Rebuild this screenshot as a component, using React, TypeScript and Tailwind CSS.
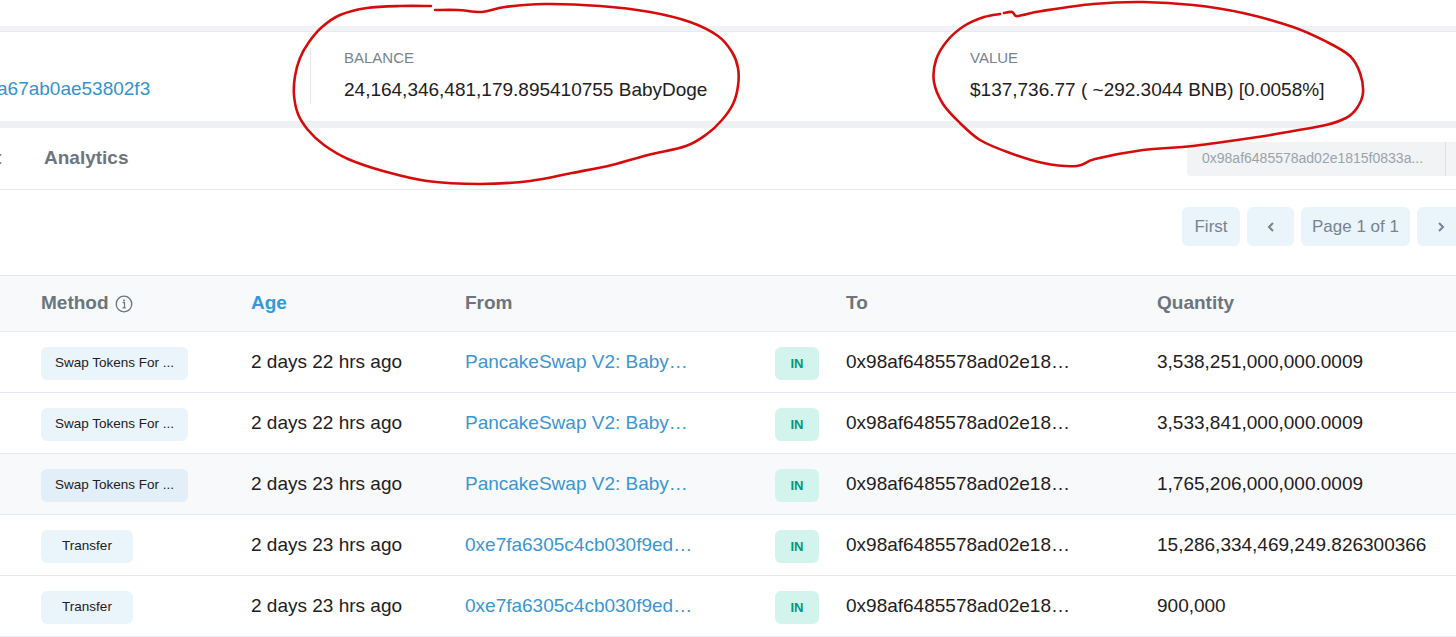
import React from "react";

type Pt = [number, number];

// hand-drawn marker rings over the summary card
const BALANCE_RING: Pt[] = [
  [431, 6], [400, 6], [367, 8], [340, 15], [322, 27], [309, 42], [300, 58], [295, 76],
  [294, 95], [298, 114], [308, 130], [324, 145], [348, 159], [383, 171], [427, 181],
  [480, 184], [530, 181], [572, 173], [612, 165], [648, 155], [686, 146], [707, 134],
  [722, 120], [733, 104], [738, 86], [738, 68], [732, 52], [718, 36], [690, 22],
  [650, 12], [600, 6], [545, 4], [505, 7], [482, 12], [458, 10], [435, 10],
];

const VALUE_RING: Pt[] = [
  [1004, 13], [1012, 12], [1016, 16], [1023, 15], [1042, 11], [1093, 4], [1143, 2],
  [1193, 5], [1243, 13], [1293, 27], [1327, 42], [1350, 56], [1360, 73], [1363, 93],
  [1357, 108], [1346, 118], [1326, 125], [1293, 131], [1258, 137], [1193, 146],
  [1143, 150], [1095, 159], [1077, 166], [1043, 163], [1010, 153], [980, 140],
  [960, 123], [943, 104], [934, 82], [936, 60], [947, 41], [964, 26], [984, 17], [1000, 14],
];

function smoothPath(pts: Pt[]) {
  let d = `M${pts[0][0]},${pts[0][1]}`;
  for (let i = 0; i < pts.length - 1; i++) {
    const p0 = pts[i - 1] ?? pts[i];
    const p1 = pts[i];
    const p2 = pts[i + 1];
    const p3 = pts[i + 2] ?? p2;
    const c1x = p1[0] + (p2[0] - p0[0]) / 6;
    const c1y = p1[1] + (p2[1] - p0[1]) / 6;
    const c2x = p2[0] - (p3[0] - p1[0]) / 6;
    const c2y = p2[1] - (p3[1] - p1[1]) / 6;
    d += ` C${c1x.toFixed(1)},${c1y.toFixed(1)} ${c2x.toFixed(1)},${c2y.toFixed(1)} ${p2[0]},${p2[1]}`;
  }
  return d;
}

const ROWS = [
  {
    method: "Swap Tokens For ...",
    age: "2 days 22 hrs ago",
    from: "PancakeSwap V2: Baby…",
    to: "0x98af6485578ad02e18…",
    qty: "3,538,251,000,000.0009",
  },
  {
    method: "Swap Tokens For ...",
    age: "2 days 22 hrs ago",
    from: "PancakeSwap V2: Baby…",
    to: "0x98af6485578ad02e18…",
    qty: "3,533,841,000,000.0009",
  },
  {
    method: "Swap Tokens For ...",
    age: "2 days 23 hrs ago",
    from: "PancakeSwap V2: Baby…",
    to: "0x98af6485578ad02e18…",
    qty: "1,765,206,000,000.0009",
    hover: true,
  },
  {
    method: "Transfer",
    age: "2 days 23 hrs ago",
    from: "0xe7fa6305c4cb030f9ed…",
    to: "0x98af6485578ad02e18…",
    qty: "15,286,334,469,249.826300366",
  },
  {
    method: "Transfer",
    age: "2 days 23 hrs ago",
    from: "0xe7fa6305c4cb030f9ed…",
    to: "0x98af6485578ad02e18…",
    qty: "900,000",
  },
];

const COLS = "grid grid-cols-[210px_214px_310px_71px_311px_1fr] pl-[41px]";

function InfoIcon() {
  return (
    <svg width="18" height="18" viewBox="0 0 18 18" fill="none" className="ml-[6px]">
      <circle cx="9" cy="9" r="7.8" stroke="#6c757d" strokeWidth="1.3" />
      <circle cx="9" cy="5.4" r="1" fill="#6c757d" />
      <path d="M7.6 7.7h1.9v5.1M7.5 12.8h3.2" stroke="#6c757d" strokeWidth="1.2" />
    </svg>
  );
}

export default function App() {
  return (
    <div className="relative h-[637px] w-[1456px] overflow-hidden bg-white font-['Liberation_Sans',Arial,sans-serif] text-[19px] text-[#1e2022]">
      <div className="h-[26px] bg-white" />
      <div className="h-[5px] bg-[#f1f2f5]" />

      {/* summary card */}
      <section className="flex h-[90px] items-start border-t border-[#e7eaf3] bg-white pt-[16px]">
        <div className="flex h-[56px] w-[311px] items-end border-r border-[#e7eaf3] pb-[4px]">
          <span className="-ml-[3px] leading-[22px] text-[#3592cf]">a67ab0ae53802f3</span>
        </div>
        <div className="w-[659px] pl-[33px] pt-[1px]">
          <div className="text-[15px] uppercase leading-[18px] text-[#77838f]">Balance</div>
          <div className="mt-[12px] leading-[22px]">24,164,346,481,179.895410755 BabyDoge</div>
        </div>
        <div className="pt-[1px]">
          <div className="text-[15px] uppercase leading-[18px] text-[#77838f]">Value</div>
          <div className="mt-[12px] leading-[22px]">$137,736.77 ( ~292.3044 BNB) [0.0058%]</div>
        </div>
      </section>
      <div className="h-[7px] bg-[#eef0f3]" />

      {/* tabs */}
      <nav className="flex h-[62px] items-center border-b border-[#e7eaf3]">
        <span className="-ml-[5px] w-[49px] font-bold text-[#6c757d]">t</span>
        <span className="font-bold text-[#6c757d]">Analytics</span>
        <div className="ml-auto flex h-[34px] items-center">
          <div className="flex h-full w-[259px] items-center rounded-l-[4px] border-r border-[#dde1e6] bg-[#f1f3f5] pl-[15px] text-[14px] text-[#9aa3ab]">
            0x98af6485578ad02e1815f0833a...
          </div>
          <div className="h-full w-[10px] bg-[#f3f4f6]" />
        </div>
      </nav>

      {/* pagination */}
      <div className="flex h-[85px] items-start justify-end gap-[7px] pt-[17px] text-[17px] text-[#77838f]">
        <span className="flex h-[39px] w-[58px] items-center justify-center rounded-[6px] bg-[#eaf4fb]">First</span>
        <span className="flex h-[39px] w-[47px] items-center justify-center rounded-[6px] bg-[#eaf4fb]">
          <svg width="10" height="12" viewBox="0 0 10 12" fill="none">
            <path d="M7 2L3 6l4 4" stroke="#77838f" strokeWidth="2" />
          </svg>
        </span>
        <span className="flex h-[39px] w-[109px] items-center justify-center rounded-[6px] bg-[#eaf4fb]">Page 1 of 1</span>
        <span className="-mr-[8px] flex h-[39px] w-[47px] items-center justify-center rounded-[6px] bg-[#eaf4fb]">
          <svg width="10" height="12" viewBox="0 0 10 12" fill="none">
            <path d="M3 2l4 4-4 4" stroke="#77838f" strokeWidth="2" />
          </svg>
        </span>
      </div>

      {/* table */}
      <div className={`${COLS} h-[57px] items-center border-y border-[#e7eaf3] bg-[#f8f9fa] font-bold text-[#6c757d]`}>
        <span className="flex items-center">
          Method
          <InfoIcon />
        </span>
        <span className="text-[#3498db]">Age</span>
        <span>From</span>
        <span />
        <span>To</span>
        <span>Quantity</span>
      </div>

      {ROWS.map((row, i) => (
        <div
          key={i}
          className={`${COLS} h-[61px] items-center border-b border-[#e7eaf3] ${row.hover ? "bg-[#f8f9fa]" : "bg-white"}`}
        >
          <span>
            <span
              className={`mt-[3px] flex h-[33px] items-center justify-center rounded-[6px] text-[13.5px] text-[#1e2022] ${
                row.method === "Transfer" ? "w-[92px]" : "w-[147px]"
              } ${row.hover ? "bg-[#e2eef8]" : "bg-[#eaf4fb]"}`}
            >
              {row.method}
            </span>
          </span>
          <span>{row.age}</span>
          <span className="text-[#3a96d4]">{row.from}</span>
          <span>
            <span className="mt-[3px] flex h-[33px] w-[44px] items-center justify-center rounded-[6px] bg-[#d3f4ec] text-[13px] font-bold text-[#02977e]">
              IN
            </span>
          </span>
          <span>{row.to}</span>
          <span>{row.qty}</span>
        </div>
      ))}

      <svg
        className="pointer-events-none absolute left-0 top-0"
        width="1456"
        height="637"
        viewBox="0 0 1456 637"
        fill="none"
      >
        <path d={smoothPath(BALANCE_RING)} stroke="#d60c0c" strokeWidth="2.6" strokeLinecap="round" strokeLinejoin="round" />
        <path d={smoothPath(VALUE_RING)} stroke="#d60c0c" strokeWidth="2.6" strokeLinecap="round" strokeLinejoin="round" />
      </svg>
    </div>
  );
}
